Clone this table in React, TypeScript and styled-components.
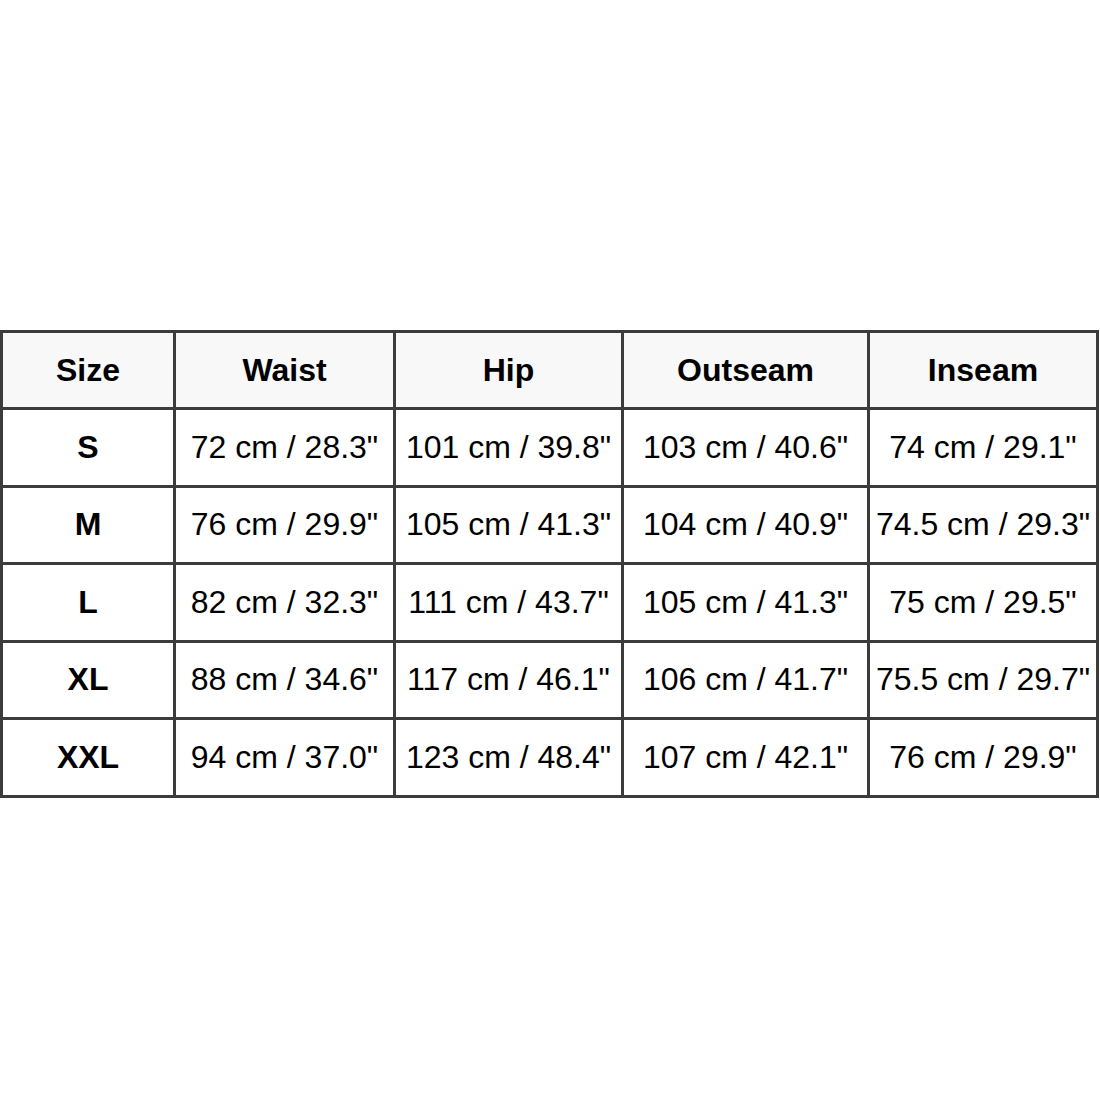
import styled, { createGlobalStyle } from "styled-components";

const GlobalStyle = createGlobalStyle`
  html, body {
    margin: 0;
    padding: 0;
    background: #ffffff;
  }
  body {
    font-family: "Liberation Sans", Arial, sans-serif;
    color: #000000;
  }
`;

const columns = [
  { key: "size", title: "Size", width: 173 },
  { key: "waist", title: "Waist", width: 220 },
  { key: "hip", title: "Hip", width: 228 },
  { key: "outseam", title: "Outseam", width: 246 },
  { key: "inseam", title: "Inseam", width: 229 },
];

const rows = [
  ["S", '72 cm / 28.3"', '101 cm / 39.8"', '103 cm / 40.6"', '74 cm / 29.1"'],
  ["M", '76 cm / 29.9"', '105 cm / 41.3"', '104 cm / 40.9"', '74.5 cm / 29.3"'],
  ["L", '82 cm / 32.3"', '111 cm / 43.7"', '105 cm / 41.3"', '75 cm / 29.5"'],
  ["XL", '88 cm / 34.6"', '117 cm / 46.1"', '106 cm / 41.7"', '75.5 cm / 29.7"'],
  ["XXL", '94 cm / 37.0"', '123 cm / 48.4"', '107 cm / 42.1"', '76 cm / 29.9"'],
];

const Page = styled.div`
  width: 1100px;
  min-height: 1100px;
  padding-top: 330px;
  box-sizing: border-box;
`;

const SizeTable = styled.table`
  width: 1096px;
  table-layout: fixed;
  border-collapse: collapse;
  font-size: 32px;
`;

const HeadCell = styled.th`
  height: 74px;
  padding: 0;
  background: #f8f8f8;
  border: 3px solid #3c3c3c;
  font-weight: 700;
  text-align: center;
  vertical-align: middle;
  color: #000000;
`;

const BodyCell = styled.td<{ $bold?: boolean }>`
  height: 74.5px;
  padding: 0;
  border: 3px solid #3c3c3c;
  text-align: center;
  vertical-align: middle;
  white-space: nowrap;
  font-weight: ${(p) => (p.$bold ? 700 : 400)};
  color: #000000;
`;

export default function App() {
  return (
    <Page>
      <GlobalStyle />
      <SizeTable>
        <colgroup>
          {columns.map((c) => (
            <col key={c.key} style={{ width: c.width }} />
          ))}
        </colgroup>
        <thead>
          <tr>
            {columns.map((c) => (
              <HeadCell key={c.key}>{c.title}</HeadCell>
            ))}
          </tr>
        </thead>
        <tbody>
          {rows.map((row) => (
            <tr key={row[0]}>
              {row.map((value, i) => (
                <BodyCell key={i} $bold={i === 0}>
                  {value}
                </BodyCell>
              ))}
            </tr>
          ))}
        </tbody>
      </SizeTable>
    </Page>
  );
}
